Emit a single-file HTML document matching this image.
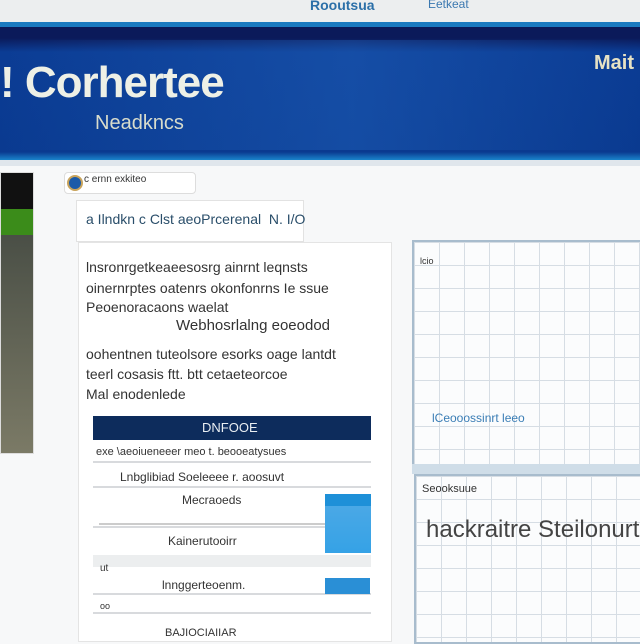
<!DOCTYPE html>
<html><head><style>
body{margin:0;width:640px;height:640px;overflow:hidden;background:#f7f8f9;font-family:"Liberation Sans",sans-serif;position:relative}
.a{position:absolute}
.grid{background-color:#fbfcfd;background-image:linear-gradient(#d6dde4 1px,transparent 1px),linear-gradient(90deg,#d6dde4 1px,transparent 1px);background-size:100% 23px,25px 100%}
.t{position:absolute;font-size:13px;color:#333;white-space:nowrap}
.row{position:absolute;left:93px;width:278px;background:#fff;border-bottom:2px solid #d8dadd}
</style></head><body>
<div class="a" style="left:0;top:0;width:640px;height:22px;background:#eceeef"></div>
<div class="t" style="left:310px;top:-3px;color:#2b6fa8;font-weight:bold;font-size:14px">Rooutsua</div>
<div class="t" style="left:428px;top:-3px;color:#3b78b0;font-size:12px">Eetkeat</div>
<div class="a" style="left:0;top:22px;width:640px;height:138px;background:linear-gradient(180deg,#1a7ac0 0,#1a7ac0 5px,#0b1a5a 5px,#0b1a5a 16px,#0b3c94 30px,#0a3a90 130px,#1a84cc 138px)"></div>
<div class="a" style="left:0;top:40px;width:640px;height:110px;background:linear-gradient(90deg,rgba(0,0,0,0),rgba(40,110,200,.35) 55%,rgba(0,0,0,0))"></div>
<div class="t" style="left:0;top:58px;font-size:44px;font-weight:bold;color:#eef0e6;letter-spacing:-1px">! Corhertee</div>
<div class="t" style="left:95px;top:112px;font-size:20px;color:#d8dccc">Neadkncs</div>
<div class="t" style="left:594px;top:52px;font-size:20px;color:#e7e2c4;font-weight:bold">Mait</div>
<div class="a" style="left:0;top:160px;width:640px;height:6px;background:#e0e6ec"></div>
<div class="a" style="left:0;top:172px;width:32px;height:280px;background:linear-gradient(180deg,#111 0,#111 36px,#3b8c1a 36px,#3b8c1a 62px,#4a4f46 62px,#7b7a66 280px);border:1px solid #ddd"></div>
<div class="a" style="left:64px;top:172px;width:130px;height:20px;background:#fff;border:1px solid #ddd;border-radius:4px"></div>
<div class="a" style="left:67px;top:175px;width:12px;height:12px;border-radius:50%;background:#1b5aa8;border:2px solid #c9a45c"></div>
<div class="t" style="left:84px;top:174px;font-size:10px">c ernn exkiteo</div>
<div class="a" style="left:76px;top:200px;width:226px;height:40px;background:#fff;border:1px solid #e2e2e2"></div>
<div class="t" style="left:86px;top:211px;font-size:14px;color:#2a4e6a">a Ilndkn c Clst aeoPrcerenal &nbsp;N. I/O</div>
<div class="a" style="left:78px;top:242px;width:312px;height:398px;background:#fff;border:1px solid #e4e4e4"></div>
<div class="t" style="left:86px;top:259px;font-size:14px">lnsronrgetkeaeesosrg ainrnt leqnsts</div>
<div class="t" style="left:86px;top:280px;font-size:14px">oinernrptes oatenrs okonfonrns Ie ssue</div>
<div class="t" style="left:86px;top:299px;font-size:14px">Peoenoracaons waelat</div>
<div class="t" style="left:176px;top:317px;font-size:15px">Webhosrlalng eoeodod</div>
<div class="t" style="left:86px;top:346px;font-size:14px">oohentnen tuteolsore esorks oage lantdt</div>
<div class="t" style="left:86px;top:366px;font-size:14px">teerl cosasis ftt. btt cetaeteorcoe</div>
<div class="t" style="left:86px;top:386px;font-size:14px">Mal enodenlede</div>
<div class="a" style="left:93px;top:416px;width:278px;height:24px;background:#0d2c5c"></div>
<div class="t" style="left:202px;top:420px;color:#e9eef2;font-size:13px">DNFOOE</div>
<div class="row" style="top:441px;height:20px"></div>
<div class="t" style="left:96px;top:446px;font-size:11px">exe \aeoiueneeer meo t. beooeatysues</div>
<div class="row" style="top:466px;height:20px"></div>
<div class="t" style="left:120px;top:470px;font-size:12px">Lnbglibiad Soeleeee r. aoosuvt</div>
<div class="row" style="top:490px;height:36px"></div>
<div class="t" style="left:182px;top:493px;font-size:12px">Mecraoeds</div>
<div class="a" style="left:325px;top:494px;width:46px;height:59px;background:linear-gradient(#1e90d8 0,#1e90d8 12px,#4aa8e6 12px,#35a2e6)"></div>
<div class="a" style="left:99px;top:523px;width:226px;height:2px;background:#ccc"></div>
<div class="t" style="left:168px;top:534px;font-size:12px">Kainerutooirr</div>
<div class="a" style="left:93px;top:555px;width:278px;height:12px;background:#eceeef"></div>
<div class="t" style="left:100px;top:563px;font-size:10px">ut</div>
<div class="row" style="top:577px;height:16px"></div>
<div class="t" style="left:162px;top:578px;font-size:12px">lnnggerteoenm.</div>
<div class="a" style="left:325px;top:578px;width:45px;height:16px;background:#2a8fd6"></div>
<div class="t" style="left:100px;top:601px;font-size:9px">oo</div>
<div class="a" style="left:93px;top:612px;width:278px;height:2px;background:#d8dadd"></div>
<div class="t" style="left:165px;top:627px;font-size:11px">BAJIOCIAIIAR</div>
<div class="a grid" style="left:412px;top:240px;width:228px;height:228px;border:2px solid #a8bccd;border-right:0"></div>
<div class="t" style="left:420px;top:256px;font-size:9px">lcio</div>
<div class="t" style="left:432px;top:411px;font-size:12px;color:#3a7db5">lCeooossinrt leeo</div>
<div class="a" style="left:412px;top:464px;width:228px;height:10px;background:#cfdde8"></div>
<div class="a grid" style="left:414px;top:474px;width:226px;height:166px;border:2px solid #a8bccd;border-right:0"></div>
<div class="t" style="left:422px;top:483px;font-size:11px">Seooksuue</div>
<div class="t" style="left:426px;top:516px;font-size:24px;color:#444">hackraitre Steilonurt. 8</div>
</body></html>
